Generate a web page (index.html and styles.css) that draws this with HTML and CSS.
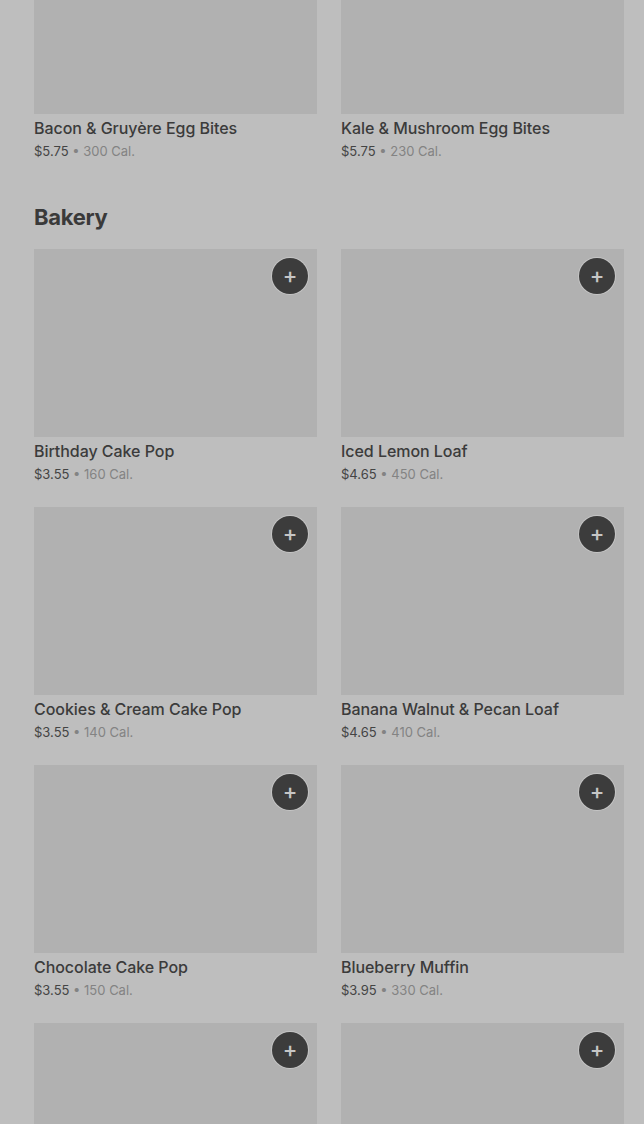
FILE: index.html
```html
<!DOCTYPE html>
<html lang="en">

<head>
    <meta charset="UTF-8">
    <meta name="viewport" content="width=device-width, initial-scale=1.0">
    <title>Menu</title>
    <link rel="stylesheet" href="styles.css">
</head>

<body>
    <div class="menu">
        <div class="grid grid-top">
            <div class="card">
                <div class="thumb"></div>
                <div class="name">Bacon &amp; Gruyère Egg Bites</div>
                <div class="meta"><span class="price">$5.75</span> • 300 Cal.</div>
            </div>
            <div class="card">
                <div class="thumb"></div>
                <div class="name">Kale &amp; Mushroom Egg Bites</div>
                <div class="meta"><span class="price">$5.75</span> • 230 Cal.</div>
            </div>
        </div>

        <h2 class="section-title">Bakery</h2>

        <div class="grid">
            <div class="card">
                <div class="thumb"><span class="add">+</span></div>
                <div class="name">Birthday Cake Pop</div>
                <div class="meta"><span class="price">$3.55</span> • 160 Cal.</div>
            </div>
            <div class="card">
                <div class="thumb"><span class="add">+</span></div>
                <div class="name">Iced Lemon Loaf</div>
                <div class="meta"><span class="price">$4.65</span> • 450 Cal.</div>
            </div>
            <div class="card">
                <div class="thumb"><span class="add">+</span></div>
                <div class="name">Cookies &amp; Cream Cake Pop</div>
                <div class="meta"><span class="price">$3.55</span> • 140 Cal.</div>
            </div>
            <div class="card">
                <div class="thumb"><span class="add">+</span></div>
                <div class="name">Banana Walnut &amp; Pecan Loaf</div>
                <div class="meta"><span class="price">$4.65</span> • 410 Cal.</div>
            </div>
            <div class="card">
                <div class="thumb"><span class="add">+</span></div>
                <div class="name">Chocolate Cake Pop</div>
                <div class="meta"><span class="price">$3.55</span> • 150 Cal.</div>
            </div>
            <div class="card">
                <div class="thumb"><span class="add">+</span></div>
                <div class="name">Blueberry Muffin</div>
                <div class="meta"><span class="price">$3.95</span> • 330 Cal.</div>
            </div>
            <!-- next row, only the tops are on screen -->
            <div class="card">
                <div class="thumb"><span class="add">+</span></div>
            </div>
            <div class="card">
                <div class="thumb"><span class="add">+</span></div>
            </div>
        </div>
    </div>
</body>

</html>
```

FILE: styles.css
```css
html,
body {
    margin: 0;
    padding: 0;
    background: #bebebe;
    height: 100%;
    overflow: hidden;
}

body {
    font-family: 'Inter', 'Roboto', sans-serif;
    color: #3b3b3b;
}

.menu {
    padding: 0 20px 0 34px;
    margin-top: -74px;
}

.grid {
    display: grid;
    grid-template-columns: 283px 283px;
    column-gap: 24px;
    row-gap: 24px;
}

.card {
    display: flex;
    flex-direction: column;
}

.thumb {
    position: relative;
    height: 188px;
    background: #b1b1b1;
}

.add {
    position: absolute;
    top: 9px;
    right: 9px;
    width: 36px;
    height: 36px;
    border-radius: 50%;
    background: #3c3c3c;
    box-shadow: 0 0 0 1px rgba(210, 210, 210, 0.6);
    color: #c6c6c6;
    font-size: 22px;
    font-weight: 500;
    line-height: 34px;
    text-align: center;
}

.name {
    margin-top: 3px;
    font-size: 16px;
    line-height: 22px;
    font-weight: 500;
    letter-spacing: -0.05px;
    color: #3b3b3b;
}

.meta {
    margin-top: 3px;
    font-size: 13px;
    line-height: 18px;
    color: #838383;
}

.price {
    color: #444;
}

.section-title {
    margin: 43px 0 18px;
    font-size: 22px;
    line-height: 28px;
    font-weight: 700;
    letter-spacing: -0.3px;
    color: #3a3a3a;
}
```
